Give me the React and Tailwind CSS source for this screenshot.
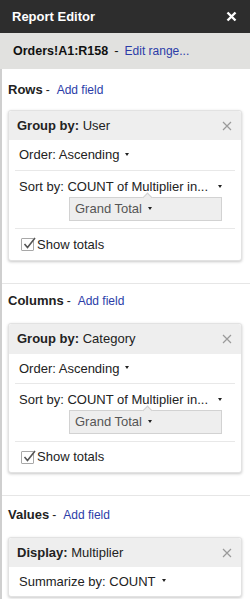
import React from 'react';

const Caret = () => (
    <span className="inline-block ml-[6px] w-0 h-0 border-l-[2.5px] border-r-[2.5px] border-t-[3.5px] border-l-transparent border-r-transparent border-t-[#222] align-middle mb-[2px]" />
);

const CloseIcon = () => (
    <svg width="10" height="10" viewBox="0 0 10 10" className="shrink-0">
        <path d="M1 1L9 9M9 1L1 9" stroke="#9a9a9a" strokeWidth="1.2" fill="none" />
    </svg>
);

const Checkbox = () => (
    <span className="relative inline-block w-[13px] h-[13px] border border-[#a8a8a8] bg-white rounded-[1px]">
        <svg width="15" height="15" viewBox="0 0 15 15" className="absolute -top-[3px] left-[0px]">
            <path d="M2.5 8L5.5 11.5L13 2" stroke="#555" strokeWidth="1.6" fill="none" />
        </svg>
    </span>
);

// the header block of each field card
const CardHeader = ({ label, value, h }) => (
    <div className={`flex items-center justify-between bg-[#eeeeee] pl-[8px] pr-[9px] rounded-t-[3px] ${h}`}>
        <span className="text-[13px] text-[#222]">
            <span className="font-bold">{label}</span> {value}
        </span>
        <CloseIcon />
    </div>
);

const GroupCard = ({ value, heights }) => (
    <div className="bg-white border border-[#e2e2e2] rounded-[3px] shadow-[0_1px_3px_rgba(0,0,0,0.22)]">
        <CardHeader label="Group by:" value={value} h={heights.header} />
        <div className="mx-[6px] border-b border-[#e8e8e8]">
            <div className={`flex items-center px-[4px] text-[13px] text-[#222] ${heights.order}`}>
                Order: Ascending <Caret />
            </div>
        </div>
        <div className="mx-[6px] border-b border-[#e8e8e8] px-[4px] pt-[8px] pb-[7px]">
            <div className="leading-[16px] text-[13px] text-[#222] whitespace-nowrap">
                Sort by: COUNT of Multiplier in... <Caret />
            </div>
            <div className="relative mt-[2px] ml-[50px] w-[153px] h-[24px] bg-[#eeeeee] border border-[#d2d2d2] flex items-center pl-[5px] text-[13px] text-[#555]">
                <span className="absolute -top-[4px] left-[74px] w-[7px] h-[7px] rotate-45 bg-[#eeeeee] border-t border-l border-[#d2d2d2]" />
                Grand Total <Caret />
            </div>
        </div>
        <div className={`flex items-center gap-[3px] px-[6px] ml-[6px] text-[13px] text-[#222] ${heights.totals}`}>
            <Checkbox />
            <span>Show totals</span>
        </div>
    </div>
);

const SectionLabel = ({ title }) => (
    <div className="h-[20px] flex items-center">
        <span className="font-bold text-[13px] text-[#222]">{title}</span>
        <span className="ml-[3px] text-[12px] text-[#222]">-</span>
        <span className="ml-[7px] text-[12px] text-[#2b3ca8]">Add field</span>
    </div>
);

export default function App() {
    return (
        <div className="w-[250px] h-[599px] overflow-hidden bg-white font-['Liberation_Sans',Arial,sans-serif]">
            <div className="h-[33px] bg-[#2d2d2d] flex items-center justify-between pl-[12px] pr-[13px]">
                <span className="text-white font-bold text-[13px]">Report Editor</span>
                <svg width="11" height="11" viewBox="0 0 11 11">
                    <path d="M1.5 1.5L9.5 9.5M9.5 1.5L1.5 9.5" stroke="#fff" strokeWidth="2.4" fill="none" />
                </svg>
            </div>
            <div className="h-[36px] bg-[#e1e1df] flex items-center pl-[13px]">
                <span className="font-bold text-[12.5px] text-[#111]">Orders!A1:R158</span>
                <span className="ml-[6px] text-[13px] text-[#111]">-</span>
                <span className="ml-[6px] text-[12px] text-[#2b3ca8]">Edit range...</span>
            </div>

            <div className="border-l-2 border-[#cfcfcf] h-full">
                {/* Rows */}
                <div className="pl-[6px] pr-[8px] pt-[11px] pb-[22px] border-b border-[#e6e6e6]">
                    <SectionLabel title="Rows" />
                    <div className="mt-[10px]">
                        <GroupCard value="User" heights={{ header: 'h-[29px]', order: 'h-[30px]', totals: 'h-[31px]' }} />
                    </div>
                </div>

                {/* Columns */}
                <div className="pl-[6px] pr-[8px] pt-[7px] pb-[22px] border-b border-[#e6e6e6]">
                    <SectionLabel title="Columns" />
                    <div className="mt-[12px]">
                        <GroupCard value="Category" heights={{ header: 'h-[30px]', order: 'h-[29px]', totals: 'h-[30px]' }} />
                    </div>
                </div>

                {/* Values */}
                <div className="pl-[6px] pr-[8px] pt-[9px]">
                    <SectionLabel title="Values" />
                    <div className="mt-[12px] bg-white border border-[#e2e2e2] rounded-[3px] shadow-[0_1px_3px_rgba(0,0,0,0.22)]">
                        <CardHeader label="Display:" value="Multiplier" h="h-[29px]" />
                        <div className="h-[29px] flex items-center px-[10px] text-[13px] text-[#222]">
                            Summarize by: COUNT <Caret />
                        </div>
                    </div>
                </div>
            </div>
        </div>
    );
}
